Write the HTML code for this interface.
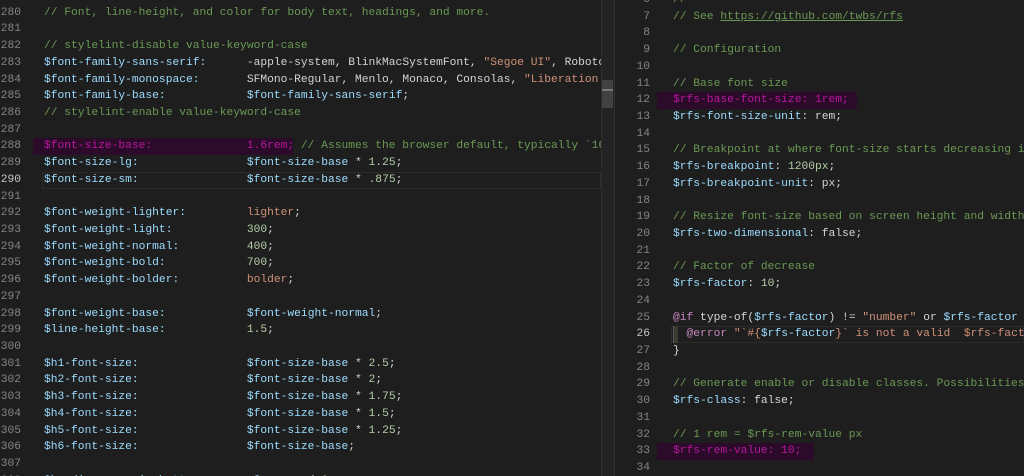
<!DOCTYPE html>
<html><head><meta charset="utf-8"><style>
body{margin:0;width:1024px;height:476px;background:#1e1e1e;overflow:hidden;position:relative;font-family:"Liberation Mono",monospace;font-size:11.28px;}
.pane{position:absolute;top:0;height:476px;overflow:hidden;}
.l{position:absolute;left:0;height:16.72px;line-height:16.72px;white-space:pre;}
.ln{position:absolute;height:16.72px;line-height:16.72px;text-align:right;color:#858585;width:30px;}
.ln.cur{color:#c6c6c6}
.v{color:#9cdcfe}.c{color:#6a9955}.s{color:#ce9178}.n{color:#b5cea8}.k{color:#c586c0}.p{color:#d4d4d4}
.hl{color:#b8179f}.hlbg{position:absolute;background:#2b0b29;height:16.72px}
.u{text-decoration:underline}
</style></head><body>
<div class="pane" id="L" style="left:0;width:601px"></div>
<div style="position:absolute;left:601px;top:0;width:12px;height:476px;background:#232323;border-left:1px solid #2e2e2e;border-right:1px solid #333"></div>
<div style="position:absolute;left:602px;top:80px;width:11px;height:28px;background:#424242"></div>
<div style="position:absolute;left:602px;top:89px;width:11px;height:2px;background:#777"></div>
<div class="pane" id="R" style="left:614px;width:410px"></div>
<script>
function esc(t){return t.replace(/&/g,'&amp;').replace(/</g,'&lt;')}
function sp(c,t){return '<span class="'+c+'">'+esc(t)+'</span>'}
const C=t=>sp('c',t),V=t=>sp('v',t),S=t=>sp('s',t),N=t=>sp('n',t),P=t=>sp('p',t),K=t=>sp('k',t),H=t=>sp('hl',t);
function pad(n,w){return ' '.repeat(Math.max(0,w-n.length))}
function kv(name,val){return V(name)+P(pad(name,30))+val}
const L=[
[279,C('//')],
[280,C('// Font, line-height, and color for body text, headings, and more.')],
[281,''],
[282,C('// stylelint-disable value-keyword-case')],
[283,V('$font-family-sans-serif:')+P('      -apple-system, BlinkMacSystemFont, ')+S('"Segoe UI"')+P(', Roboto, ')],
[284,V('$font-family-monospace:')+P('       SFMono-Regular, Menlo, Monaco, Consolas, ')+S('"Liberation Mono"')],
[285,kv('$font-family-base:',V('$font-family-sans-serif')+P(';'))],
[286,C('// stylelint-enable value-keyword-case')],
[287,''],
[288,H('$font-size-base:              1.6rem;')+C(' // Assumes the browser default, typically `16px`')],
[289,kv('$font-size-lg:',V('$font-size-base')+P(' * ')+N('1.25')+P(';'))],
[290,kv('$font-size-sm:',V('$font-size-base')+P(' * ')+N('.875')+P(';'))],
[291,''],
[292,kv('$font-weight-lighter:',S('lighter')+P(';'))],
[293,kv('$font-weight-light:',N('300')+P(';'))],
[294,kv('$font-weight-normal:',N('400')+P(';'))],
[295,kv('$font-weight-bold:',N('700')+P(';'))],
[296,kv('$font-weight-bolder:',S('bolder')+P(';'))],
[297,''],
[298,kv('$font-weight-base:',V('$font-weight-normal')+P(';'))],
[299,kv('$line-height-base:',N('1.5')+P(';'))],
[300,''],
[301,kv('$h1-font-size:',V('$font-size-base')+P(' * ')+N('2.5')+P(';'))],
[302,kv('$h2-font-size:',V('$font-size-base')+P(' * ')+N('2')+P(';'))],
[303,kv('$h3-font-size:',V('$font-size-base')+P(' * ')+N('1.75')+P(';'))],
[304,kv('$h4-font-size:',V('$font-size-base')+P(' * ')+N('1.5')+P(';'))],
[305,kv('$h5-font-size:',V('$font-size-base')+P(' * ')+N('1.25')+P(';'))],
[306,kv('$h6-font-size:',V('$font-size-base')+P(';'))],
[307,''],
[308,V('$headings-margin-bottom:')+P('       ')+V('$spacer')+P(' / ')+N('2')+P(';')]
];
const R=[
[6,C('//')],
[7,C('// See ')+'<span class="c u">https://github.com/twbs/rfs</span>'],
[8,''],[9,C('// Configuration')],[10,''],
[11,C('// Base font size')],
[12,H('$rfs-base-font-size: 1rem;')],
[13,V('$rfs-font-size-unit')+P(': rem;')],
[14,''],
[15,C('// Breakpoint at where font-size starts decreasing if screen width is smaller')],
[16,V('$rfs-breakpoint')+P(': ')+N('1200px')+P(';')],
[17,V('$rfs-breakpoint-unit')+P(': px;')],
[18,''],
[19,C('// Resize font-size based on screen height and width')],
[20,V('$rfs-two-dimensional')+P(': false;')],
[21,''],
[22,C('// Factor of decrease')],
[23,V('$rfs-factor')+P(': ')+N('10')+P(';')],
[24,''],
[25,K('@if')+P(' type-of(')+V('$rfs-factor')+P(') != ')+S('"number"')+P(' or ')+V('$rfs-factor')+P(' < 1 {')],
[26,'  '+K('@error')+S(' "`#{')+V('$rfs-factor')+S('}` is not a valid  $rfs-factor')],
[27,P('}')],
[28,''],
[29,C('// Generate enable or disable classes. Possibilities: false, "enable" or "disable"')],
[30,V('$rfs-class')+P(': false;')],
[31,''],
[32,C('// 1 rem = $rfs-rem-value px')],
[33,H('$rfs-rem-value: 10;')],
[34,'']
];
const LH=16.72;
function build(id,arr,top0,lnRight,codeX,cur,hls,hlX,hlW){
 let h='';const el=document.getElementById(id);
 arr.forEach((r,i)=>{const y=top0+i*LH;
  if(hls[r[0]])h+='<div class="hlbg" style="top:'+y+'px;left:'+hlX+'px;width:'+hls[r[0]]+'px"></div>';
  if(r[0]==cur)h+='<div style="position:absolute;top:'+y+'px;left:'+(codeX-2)+'px;right:0;height:14.7px;border:1px solid #2c2c2c"></div>';
  h+='<div class="ln'+(r[0]==cur?' cur':'')+'" style="top:'+y+'px;left:'+(lnRight-30)+'px">'+r[0]+'</div>';
  h+='<div class="l" style="top:'+y+'px;left:'+codeX+'px">'+r[1]+'</div>';});
 el.innerHTML=h;}
build('L',L,-12.1,21,44,290,{288:260},33);
build('R',R,-8.1,36,59,26,{12:200,33:157},43);
document.getElementById('R').insertAdjacentHTML('beforeend','<div style="position:absolute;left:59px;top:'+(-8.1+20*LH)+'px;width:4px;height:16.7px;background:#3a3a30;border-left:1px solid #555"></div>');
</script>
</body></html>
